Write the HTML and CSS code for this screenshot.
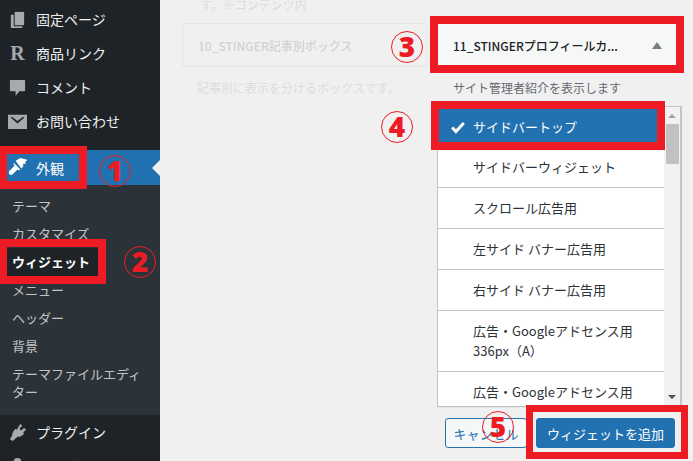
FILE: index.html
```html
<!DOCTYPE html>
<html lang="ja">
<head>
<meta charset="utf-8">
<title>ウィジェット</title>
<link rel="stylesheet" href="styles.css">
</head>
<body>
<div class="page">
  <nav class="sidebar">
    <ul class="menu">
      <li class="item"><svg class="ico" viewBox="0 0 20 20"><path d="M7 2h10v14H7z"/><path d="M3 5h3v12h9v2H3z"/></svg><span>固定ページ</span></li>
      <li class="item"><span class="ico r">R</span><span>商品リンク</span></li>
      <li class="item"><svg class="ico" viewBox="0 0 20 20"><path d="M3 2h14a1 1 0 0 1 1 1v10a1 1 0 0 1-1 1h-5l-4 5v-5H3a1 1 0 0 1-1-1V3a1 1 0 0 1 1-1z"/></svg><span>コメント</span></li>
      <li class="item"><svg class="ico" viewBox="0 0 20 20"><path fill-rule="evenodd" d="M0 3h20v15H0zM3 6l7 6 7-6-1-1-6 4.600L4 5z"/></svg><span>お問い合わせ</span></li>
    </ul>
    <div class="current">
      <svg class="ico" viewBox="0 0 20 20"><path d="M8 3l5-3 8 2-3 2 1 2-3 0 0 3-2 2z"/><path d="M6 5l7 7-2 1-1-1-4 4-2 2-3-1 0-3 2-2 4-4-1-1z"/></svg>
      <span class="current-label">外観</span>
      <i class="notch"></i>
    </div>
    <ul class="submenu">
      <li>テーマ</li>
      <li>カスタマイズ</li>
      <li class="on">ウィジェット</li>
      <li>メニュー</li>
      <li>ヘッダー</li>
      <li>背景</li>
      <li>テーマファイルエディター</li>
    </ul>
    <ul class="menu">
      <li class="item"><svg class="ico" viewBox="0 0 20 20"><path d="M13 1l2 2-3 3 2 2 3-3 2 2-3 3 1 1-1 1c-1.500 1.500-4 3-6 2.500L5 19l-3-2 2.500-4c-.5-2 1-4.500 2.500-6l1-1 1 1z"/></svg><span>プラグイン</span></li>
      <li class="item"><svg class="ico" viewBox="0 0 20 20"><circle cx="10" cy="5" r="4"/><path d="M3 18c0-5 3-7 7-7s7 2 7 7z"/></svg><span>ユーザー</span></li>
    </ul>
  </nav>

  <main class="content">
    <div class="col faded">
      <p class="clip">す。※コンテンツ内</p>
      <div class="widget-box"><span class="title">10_STINGER記事別ボックス</span></div>
      <p class="desc">記事別に表示を分けるボックスです。</p>
    </div>
    <div class="col">
      <p class="clip"></p>
      <div class="widget-box open">
        <span class="title">11_STINGERプロフィールカ...</span>
        <i class="arrow"></i>
      </div>
      <p class="desc live">サイト管理者紹介を表示します</p>
      <div class="chooser">
        <ul class="areas">
          <li class="selected"><svg class="check" viewBox="0 0 14 12"><path d="M1 6.500l1.800-1.800L5.200 7 11.200.8 13 2.600 5.200 11z"/></svg>サイドバートップ</li>
          <li>サイドバーウィジェット</li>
          <li>スクロール広告用</li>
          <li>左サイド バナー広告用</li>
          <li>右サイド バナー広告用</li>
          <li>広告・Googleアドセンス用<br>336px（A）</li>
          <li>広告・Googleアドセンス用<br>336px（B）</li>
        </ul>
        <div class="scrollbar">
          <i class="up"></i>
          <b class="thumb"></b>
          <i class="down"></i>
        </div>
      </div>
      <div class="actions">
        <button class="btn cancel">キャンセル</button>
        <button class="btn primary">ウィジェットを追加</button>
      </div>
    </div>
  </main>

  <div class="frame f1"></div>
  <div class="frame f2"></div>
  <div class="frame f3"></div>
  <div class="frame f4"></div>
  <div class="frame f5"></div>
  <span class="num n1">1</span>
  <span class="num n2">2</span>
  <span class="num n3">3</span>
  <span class="num n4">4</span>
  <span class="num n5">5</span>
</div>
</body>
</html>
```
FILE: styles.css
```css
* { box-sizing: border-box; }
html, body { margin: 0; padding: 0; }
body { font-family: "Noto Sans CJK JP", "Noto Sans", sans-serif; font-size: 13px; color: #2c3338; }
ul { list-style: none; margin: 0; padding: 0; }
p { margin: 0; }

.page { position: relative; width: 693px; height: 461px; overflow: hidden; display: flex; background: #f0f0f1; }

.sidebar { flex: 0 0 160px; height: 461px; background: #1d2327; color: #f0f0f1; font-size: 14px; padding-top: 2px; overflow: hidden; }
.menu { margin: 0; }
.item { height: 34px; display: flex; align-items: center; gap: 9px; padding-left: 8px; }
.ico { width: 19px; height: 19px; fill: #a7aaad; flex: none; }
.r { font: bold 20px/19px "Liberation Serif", serif; color: #a7aaad; text-align: center; }

.current { height: 35px; margin-top: 12px; background: #2271b1; color: #fff; display: flex; align-items: center; gap: 9px; padding-left: 8px; position: relative; }
.current .ico { fill: #fff; }
.notch { position: absolute; right: 0; top: 10px; border: 8px solid transparent; border-right-color: #f0f0f1; border-left-width: 0; }

.submenu { background: #2c3338; padding: 7px 0 9px; color: #c3c4c7; font-size: 13px; }
.submenu li { padding: 5px 12px; line-height: 18px; }
.submenu li.on { color: #fff; font-weight: 700; background: linear-gradient(#1d2327, #1d2327) no-repeat 0 0 / 100px 100%; }

.content { flex: 1; display: grid; grid-template-columns: 245px 245px; column-gap: 10px; padding-left: 22px; align-items: start; }
.col { display: flex; flex-direction: column; }
.clip { height: 23px; padding-left: 18px; line-height: 10px; font-size: 12px; color: #dcdcdd; white-space: nowrap; }
.widget-box { height: 44px; display: flex; align-items: center; justify-content: space-between; padding: 0 15px; border: 1px solid #e6e6e7; color: #d2d2d3; font-weight: 500; }
.desc { padding: 11px 0 0 15px; font-size: 12px; line-height: 20px; height: 39px; color: #dcdcdd; white-space: nowrap; }
.open { background: #f6f7f7; border-color: #dcdcde; color: #1d2327; padding-right: 19px; }
.title { font-size: 12px; }
.arrow { border: 5px solid transparent; border-top-width: 0; border-bottom: 7px solid #787c82; }
.desc.live { color: #646970; padding-left: 16px; }

.chooser { height: 301px; display: flex; background: #fff; border: 1px solid #c3c4c7; border-right-width: 2px; overflow: hidden; box-shadow: 0 1px 1px rgba(0,0,0,.04); }
.areas { flex: 1; min-width: 0; overflow: hidden; color: #2c3338; }
.areas li { padding: 10px 10px 10px 35px; line-height: 20px; border-bottom: 1px solid #c3c4c7; }
.areas li.selected { position: relative; background: #2271b1; color: #fff; border-bottom: 0; }
.check { position: absolute; left: 12px; top: 14px; width: 16px; height: 14px; fill: #fff; }
.scrollbar { flex: 0 0 16px; background: #f1f1f1; display: flex; flex-direction: column; align-items: center; padding-top: 7px; }
.up { border: 4px solid transparent; border-top-width: 0; border-bottom: 4px solid #a3a3a3; }
.thumb { width: 13px; height: 40px; background: #c1c1c1; margin-top: 6px; }
.down { border: 4px solid transparent; border-bottom-width: 0; border-top: 4px solid #505050; margin-top: auto; margin-bottom: 7px; }

.actions { display: flex; justify-content: space-between; padding: 11px 7px 0 8px; }
.btn { height: 30px; border-radius: 3px; font: inherit; font-size: 13px; padding: 0; }
.cancel { width: 82px; background: #f6f7f7; border: 1px solid #2271b1; color: #2271b1; }
.primary { width: 139px; background: #2271b1; border: 1px solid #2271b1; color: #fff; }

.frame { position: absolute; border: 8px solid #ed1c24; }
.f1 { left: -1px; top: 146px; width: 88px; height: 43px; }
.f2 { left: -1px; top: 239px; width: 107px; height: 45px; }
.f3 { left: 430px; top: 16px; width: 254px; height: 57px; }
.f4 { left: 431px; top: 101px; width: 234px; height: 49px; }
.f5 { left: 526px; top: 405px; width: 162px; height: 54px; border-width: 7px; }

.num { position: absolute; width: 32px; height: 32px; border: 1px solid #ed1c24; border-radius: 50%; color: #ed1c24; font: 800 28px/29px "Open Sans", sans-serif; text-align: center; }
.n1 { left: 99px; top: 155px; }
.n2 { left: 124px; top: 246px; }
.n3 { left: 391px; top: 31px; }
.n4 { left: 381px; top: 111px; }
.n5 { left: 482px; top: 411px; }
```
